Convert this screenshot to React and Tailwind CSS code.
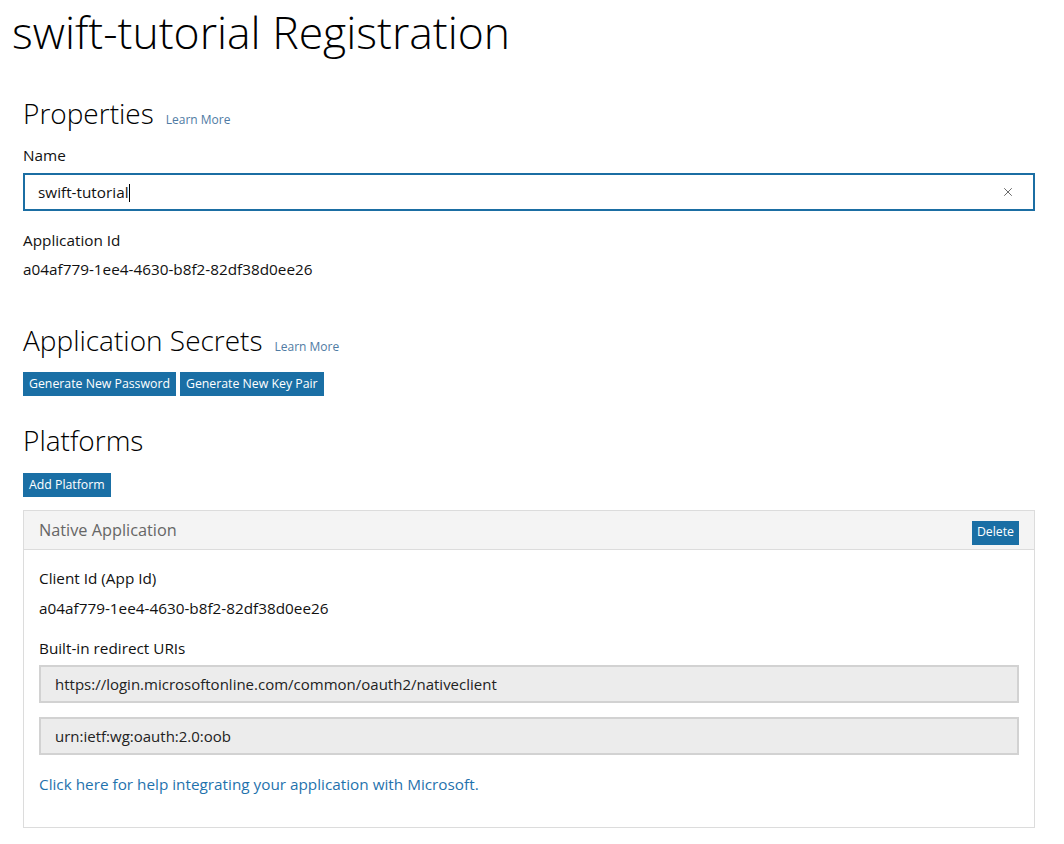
import { X } from "lucide-react";

const uris = [
  "https://login.microsoftonline.com/common/oauth2/nativeclient",
  "urn:ietf:wg:oauth:2.0:oob",
];

function Heading({ children, learn }) {
  return (
    <div className="flex items-baseline gap-[12px]">
      <h2 className="text-[28px] font-light leading-[40px] text-black">{children}</h2>
      {learn && <a className="text-[12px] text-[#4f7ba3]">Learn More</a>}
    </div>
  );
}

function Btn({ children }) {
  return (
    <button className="h-[24px] px-[6px] bg-[#1a6fa5] text-white text-[12.3px] leading-[24px]">
      {children}
    </button>
  );
}

export default function App() {
  return (
    <div
      className="min-h-screen bg-white text-[#111] pb-4"
      style={{ fontFamily: '"Open Sans", sans-serif' }}
    >
      <h1 className="ml-[12px] pt-[2px] text-[44.5px] font-light leading-[60px] text-black">
        swift-tutorial Registration
      </h1>

      <div className="px-[23px] pr-[29px] text-[15.3px]">
        <div className="mt-[31px]">
          <Heading learn>Properties</Heading>
        </div>
        <div className="mt-[11px] leading-[22px]">Name</div>
        <div className="mt-[7px] flex h-[38px] items-center gap-2 border-2 border-[#1b6ea3]">
          <span className="ml-[13px] flex-1">
            swift-tutorial<span className="inline-block w-px h-[18px] bg-black align-middle" />
          </span>
          <X size={14} strokeWidth={1.5} className="mr-[18px] text-[#555]" />
        </div>
        <div className="mt-[18px] leading-[22px]">Application Id</div>
        <div className="mt-[7px] leading-[22px]">a04af779-1ee4-4630-b8f2-82df38d0ee26</div>

        <div className="mt-[40px]">
          <Heading learn>Application Secrets</Heading>
        </div>
        <div className="mt-[12px] flex gap-[4px]">
          <Btn>Generate New Password</Btn>
          <Btn>Generate New Key Pair</Btn>
        </div>

        <div className="mt-[24px]">
          <Heading>Platforms</Heading>
        </div>
        <div className="mt-[13px] flex">
          <Btn>Add Platform</Btn>
        </div>

        <div className="mt-[13px] border border-[#dcdcdc]">
          <div className="flex h-[39px] items-center justify-between border-b border-[#dcdcdc] bg-[#f4f4f4] pl-[15px] pr-[15px]">
            <span className="text-[16.3px] text-[#666]">Native Application</span>
            <button className="mt-[5px] h-[24px] px-[5px] bg-[#1a6fa5] text-white text-[12.3px]">Delete</button>
          </div>
          <div className="px-[15px] pt-[17px] pb-[32px]">
            <div className="leading-[22px]">Client Id (App Id)</div>
            <div className="mt-[8px] leading-[22px]">a04af779-1ee4-4630-b8f2-82df38d0ee26</div>
            <div className="mt-[18px] leading-[22px]">Built-in redirect URIs</div>
            <div className="mt-[6px] flex flex-col gap-[14px]">
              {uris.map((u) => (
                <div
                  key={u}
                  className="flex h-[38px] items-center border-2 border-[#d2d2d2] bg-[#ececec] px-[14px] text-[15px] text-[#222]"
                >
                  {u}
                </div>
              ))}
            </div>
            <a className="mt-[18px] block leading-[22px] text-[#1f72ad]">
              Click here for help integrating your application with Microsoft.
            </a>
          </div>
        </div>
      </div>
    </div>
  );
}
